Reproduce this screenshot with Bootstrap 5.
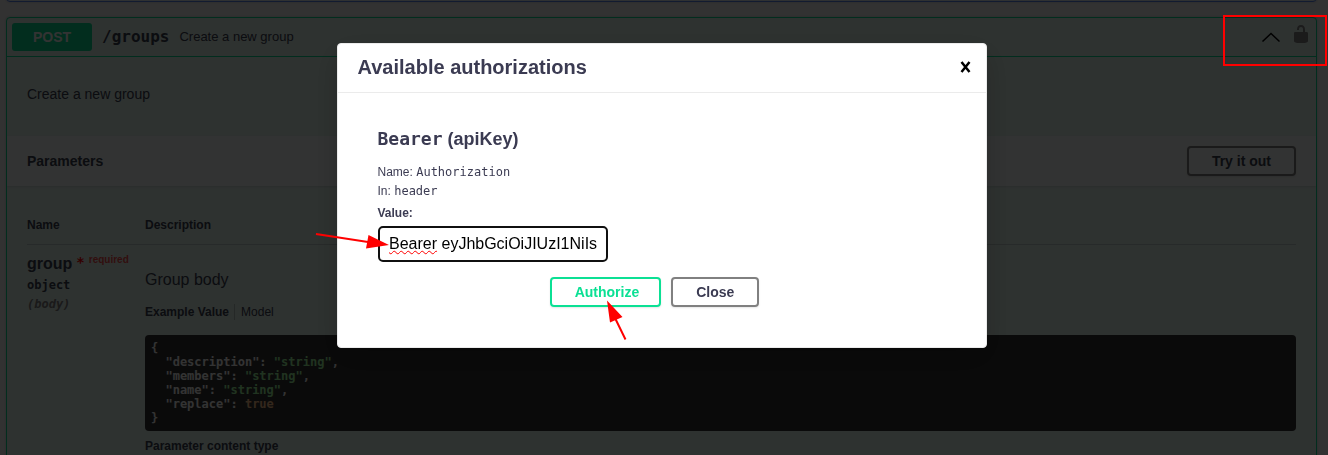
<!DOCTYPE html>
<html lang="en">
<head>
<meta charset="utf-8">
<meta name="viewport" content="width=device-width, initial-scale=1">
<title>API documentation</title>
<link href="https://cdn.jsdelivr.net/npm/bootstrap@5.3.0/dist/css/bootstrap.min.css" rel="stylesheet">
<style>
  :root { --ink: #3b4151; --post: #0be094; }
  body { background: #fafafa; color: var(--ink); font-family: "Liberation Sans", Arial, sans-serif; font-size: 14px; line-height: 16px; height: 455px; overflow: hidden; }
  .mono { font-family: "DejaVu Sans Mono", monospace; }
  .page { height: 455px; overflow: hidden; padding: 0 11px 0 6px; }
  .op { border: 1px solid var(--post); border-radius: 4px; box-shadow: 0 0 3px rgba(0,0,0,.19); background: #e6f7f0; }
  .op-get { height: 10px; margin-top: -8px; margin-bottom: 15px; background: rgba(97,175,254,.1); border-color: #5a86f0; }
  .op-post { height: 500px; }
  .op-head { height: 39px; padding: 0 5px; border-bottom: 1px solid var(--post); }
  .verb { width: 80px; height: 28px; line-height: 28px; border-radius: 3px; background: var(--post); color: #fff; font-weight: 700; text-align: center; }
  .op-path { font-size: 16px; font-weight: 700; margin-left: 10px; }
  .op-note { font-size: 13px; margin-left: 10px; }
  .op-desc { height: 79px; padding: 29px 20px 0; }
  .op-section { height: 50px; padding: 0 20px; background: rgba(255,255,255,.8); box-shadow: 0 1px 2px rgba(0,0,0,.1); }
  .tool-btn { height: 30px; padding: 0 23px; border: 2px solid gray; border-radius: 4px; background: transparent; color: var(--ink); font-size: 14px; font-weight: 700; line-height: 16px; box-shadow: 0 1px 2px rgba(0,0,0,.1); }
  .tool-btn.go { border-color: var(--post); color: var(--post); padding-right: 20px; }
  .params { padding: 31px 20px 0; }
  .params-head { height: 28px; font-size: 12px; font-weight: 700; border-bottom: 1px solid rgba(59,65,81,.2); }
  .col-name { flex: 0 0 118px; }
  .p-name { font-size: 16px; font-weight: 700; height: 18px; line-height: 18px; margin-top: 10px; }
  .p-req { font-size: 10px; color: #f00; opacity: .7; line-height: 10px; }
  .p-star { color: #f00; font: 700 14px/15px "DejaVu Sans Mono", monospace; margin-left: 4px; }
  .p-type { font-size: 12px; font-weight: 700; line-height: 15px; margin-top: 5px; }
  .p-in { font-size: 12px; font-weight: 700; font-style: italic; color: gray; line-height: 15px; margin-top: 4px; }
  .p-body { font-size: 16px; line-height: 20px; padding-top: 25px; height: 59px; }
  .tabs { font-size: 12px; line-height: 16px; height: 31px; }
  .tabs span + span { border-left: 1px solid rgba(0,0,0,.2); margin-left: 5px; padding-left: 6px; height: 16px; }
  .example { height: 96px; margin: 0; padding: 6px; border-radius: 4px; background: #333; color: #fff; font: 700 12px/14px "DejaVu Sans Mono", monospace; overflow: hidden; }
  .s-str { color: #a2fca2; }
  .s-bool { color: #fcc28c; }
  .ctype { font-size: 12px; font-weight: 700; margin-top: 7px; }
  .shade { position: fixed; inset: 0; background: rgba(0,0,0,.8); }
  .auth { position: fixed; left: 337px; top: 43px; width: 650px; height: 305px; background: #fff; border: 1px solid #ebebeb; border-radius: 4px; box-shadow: 0 10px 30px rgba(0,0,0,.2); color: #3b3b52; }
  .auth .tool-btn:not(.go) { color: #3b3b52; }
  .auth-head { height: 49px; padding: 0 15px 3px 19.500px; border-bottom: 1px solid #ebebeb; }
  .auth-head h3 { font-size: 20px; font-weight: 600; line-height: 24px; margin: 0; }
  .auth-main { padding: 35px 40px 0 39.500px; }
  .auth-main h4 { font-size: 18px; font-weight: 700; line-height: 22px; margin: 0 0 13px; }
  .auth-row { font-size: 12px; line-height: 19px; height: 19px; }
  .auth-label { padding-top: 3px; }
  .key { width: 230px; height: 36px; border: 2px solid #101010; border-radius: 5px; padding: 0 9px; font-size: 16px; line-height: 31px; color: #000; white-space: nowrap; margin: 6px 0 0 .5px; }
  .typo { text-decoration: underline wavy #f00 1px; text-underline-offset: 1px; text-decoration-skip-ink: none; }
  .auth-actions { gap: 10px; margin-top: 15px; padding-right: 14.500px; }
  .marks { position: fixed; left: 0; top: 0; }
  .lock { margin: -6px 0 0 10px; }
</style>
</head>
<body>
<main class="page">
  <div class="op op-get"></div>
  <section class="op op-post">
    <header class="op-head d-flex align-items-center">
      <span class="verb">POST</span>
      <span class="op-path mono">/groups</span>
      <span class="op-note">Create a new group</span>
      <svg class="ms-auto" width="20" height="20" viewBox="0 0 20 20"><path d="M1.500 14.500 10 6.500l8.500 8" fill="none" stroke="#000" stroke-width="1.500"/></svg>
      <svg class="lock" width="20" height="20" viewBox="0 0 20 20"><path fill="#888" d="M15.800 8H14V5.600C14 2.703 12.665 1 10 1 7.334 1 6 2.703 6 5.600V6h2v-.801C8 3.754 8.797 3 10 3c1.203 0 2 .754 2 2.199V8H4c-.553 0-1 .646-1 1.199V17c0 .549.428 1.139.951 1.307l1.197.387C5.672 18.861 6.550 19 7.100 19h5.800c.549 0 1.428-.139 1.951-.307l1.196-.387c.524-.167.953-.757.953-1.306V9.199C17 8.646 16.352 8 15.800 8z"/></svg>
    </header>
    <div class="op-desc">Create a new group</div>
    <div class="op-section d-flex align-items-center justify-content-between">
      <strong>Parameters</strong>
      <button class="tool-btn" type="button">Try it out</button>
    </div>
    <div class="params">
      <div class="params-head d-flex"><span class="col-name">Name</span><span>Description</span></div>
      <div class="d-flex">
        <div class="col-name">
          <div class="p-name d-flex">group<span class="p-star">*</span><span class="p-req ms-1">required</span></div>
          <div class="p-type mono">object</div>
          <div class="p-in mono">(body)</div>
        </div>
        <div class="flex-grow-1">
          <div class="p-body">Group body</div>
          <div class="tabs d-flex"><span class="fw-bold">Example Value</span><span>Model</span></div>
<pre class="example">{
  "description": <span class="s-str">"string"</span>,
  "members": <span class="s-str">"string"</span>,
  "name": <span class="s-str">"string"</span>,
  "replace": <span class="s-bool">true</span>
}</pre>
          <div class="ctype">Parameter content type</div>
        </div>
      </div>
    </div>
  </section>
</main>
<div class="shade"></div>
<section class="auth" role="dialog">
  <header class="auth-head d-flex align-items-center justify-content-between">
    <h3>Available authorizations</h3>
    <svg width="11" height="12" viewBox="0 0 11 12"><path d="M1.500 1 9.500 11M9.500 1 1.500 11" stroke="#000" stroke-width="2.500" fill="none"/></svg>
  </header>
  <div class="auth-main">
    <h4><span class="mono">Bearer</span> (apiKey)</h4>
    <div class="auth-row">Name: <span class="mono">Authorization</span></div>
    <div class="auth-row">In: <span class="mono">header</span></div>
    <div class="auth-row auth-label fw-bold">Value:</div>
    <div class="key"><span class="typo">Bearer</span> eyJhbGciOiJIUzI1NiIs</div>
    <div class="auth-actions d-flex justify-content-center">
      <button class="tool-btn go" type="button">Authorize</button>
      <button class="tool-btn" type="button">Close</button>
    </div>
  </div>
</section>
<svg class="marks" width="1328" height="455" viewBox="0 0 1328 455">
  <rect x="1224" y="16" width="102" height="49" fill="none" stroke="#f00" stroke-width="2"/>
  <path d="M316 234 368 242M625.500 339.500 615 318" stroke="#f00" stroke-width="2" fill="none"/>
  <path d="M389 245 368.500 235 366 248.500zM607 300.500 622.500 317 610 322.500z" fill="#f00"/>
</svg>
<script src="https://cdn.jsdelivr.net/npm/bootstrap@5.3.0/dist/js/bootstrap.bundle.min.js"></script>
</body>
</html>
